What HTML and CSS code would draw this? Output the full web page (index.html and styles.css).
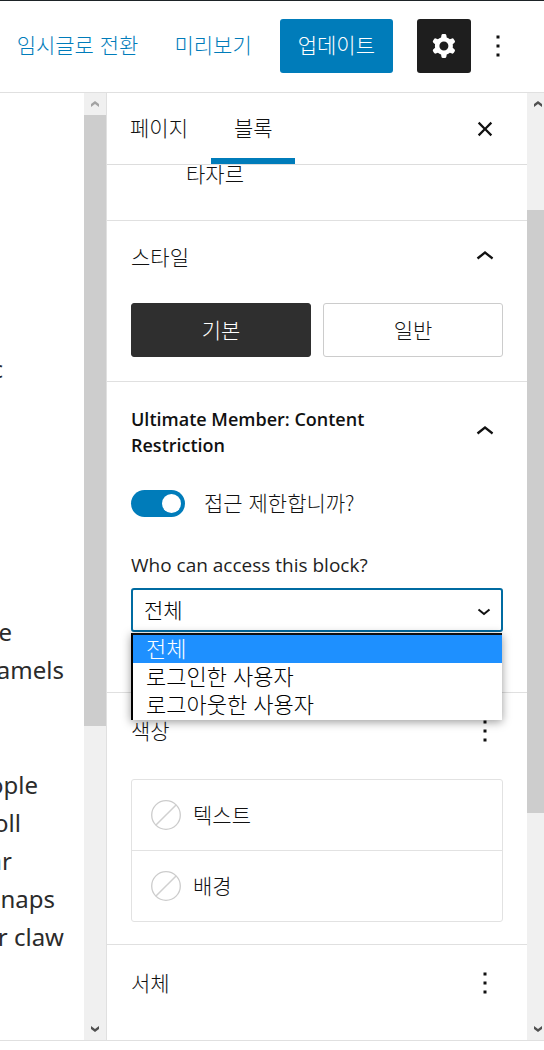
FILE: index.html
```html
<!DOCTYPE html>
<html lang="ko">
<head>
<meta charset="utf-8">
<meta name="viewport" content="width=device-width, initial-scale=1">
<title>페이지 편집</title>
<link rel="stylesheet" href="styles.css">
</head>
<body>
<svg class="sprite" aria-hidden="true">
  <symbol id="i-cog" viewBox="0 0 24 24"><path fill-rule="evenodd" d="M10.289 4.836A1 1 0 0111.275 4h1.306a1 1 0 01.987.836l.244 1.466c.787.26 1.503.679 2.108 1.218l1.393-.522a1 1 0 011.216.437l.653 1.13a1 1 0 01-.23 1.273l-1.148.944a6.025 6.025 0 010 2.435l1.149.946a1 1 0 01.23 1.272l-.653 1.13a1 1 0 01-1.216.437l-1.394-.522c-.605.54-1.32.958-2.108 1.218l-.244 1.466a1 1 0 01-.987.836h-1.306a1 1 0 01-.986-.836l-.244-1.466a5.995 5.995 0 01-2.108-1.218l-1.394.522a1 1 0 01-1.217-.436l-.653-1.131a1 1 0 01.23-1.272l1.149-.946a6.026 6.026 0 010-2.435l-1.148-.944a1 1 0 01-.23-1.272l.653-1.131a1 1 0 011.217-.437l1.393.522a5.994 5.994 0 012.108-1.218l.244-1.466zM14.929 12a3 3 0 11-6 0 3 3 0 016 0z"/></symbol>
  <symbol id="i-more" viewBox="0 0 24 24"><path d="M13 19h-2v-2h2v2zm0-6h-2v-2h2v2zm0-6h-2V5h2v2z"/></symbol>
  <symbol id="i-close" viewBox="0 0 24 24"><path d="M12 13.06l3.712 3.713 1.061-1.06L13.061 12l3.712-3.712-1.06-1.06L12 10.938 8.288 7.227l-1.061 1.06L10.939 12l-3.712 3.712 1.06 1.061L12 13.061z"/></symbol>
  <symbol id="i-up" viewBox="0 0 24 24"><path d="M6.5 12.4L12 8l5.5 4.4-.9 1.2L12 10l-4.5 3.6-1-1.2z"/></symbol>
  <symbol id="i-down" viewBox="0 0 14 8"><path d="M1.500 1.500L7 6l5.500-4.500" fill="none" stroke="currentColor" stroke-width="2"/></symbol>
  <symbol id="i-arrow" viewBox="0 0 8 6"><path d="M0 6V3L4 0l4 3v3L4 3z"/></symbol>
  <symbol id="i-none" viewBox="0 0 30 30"><path d="M4.700 25.300L25.300 4.700" fill="none" stroke="#d0d0d0" stroke-width="1.500"/><circle cx="15" cy="15" r="14.300" fill="none" stroke="#ccc" stroke-width="1.300"/></symbol>
</svg>
<div class="app">
  <header class="topbar">
    <button class="link-btn" type="button">임시글로 전환</button>
    <button class="link-btn" type="button">미리보기</button>
    <button class="update" type="button">업데이트</button>
    <button class="settings" type="button" aria-label="설정"><svg class="icon"><use href="#i-cog"/></svg></button>
    <button class="icon-btn" type="button" aria-label="옵션"><svg class="icon"><use href="#i-more"/></svg></button>
  </header>
  <div class="body">
    <main class="canvas">
      <p class="para"><span class="line to-3">c</span></p>
      <p class="para"><span class="line to-12">e</span><span class="line to-64">camels</span></p>
      <p class="para"><span class="line to-38">people</span><span class="line to-21">roll</span><span class="line to-12">ar</span><span class="line to-55">snaps</span><span class="line to-64">r claw</span></p>
    </main>
    <div class="scrollbar canvas-scroll" aria-hidden="true">
      <span class="cap dim"><svg class="arrow"><use href="#i-arrow"/></svg></span>
      <span class="track"><span class="thumb"></span></span>
      <span class="cap down"><svg class="arrow"><use href="#i-arrow"/></svg></span>
    </div>
    <aside class="sidebar">
      <div class="tabs">
        <button class="tab" type="button">페이지</button>
        <button class="tab active" type="button">블록</button>
        <button class="icon-btn close" type="button" aria-label="닫기"><svg class="icon"><use href="#i-close"/></svg></button>
      </div>
      <div class="panels">
        <p class="summary">타자르</p>
        <section class="panel">
          <div class="panel-head"><h2 class="panel-title">스타일</h2><button class="icon-btn" type="button" aria-label="스타일 접기"><svg class="icon"><use href="#i-up"/></svg></button></div>
          <div class="panel-body variants">
            <button class="variant selected" type="button">기본</button>
            <button class="variant" type="button">일반</button>
          </div>
        </section>
        <section class="panel">
          <div class="panel-head"><h2 class="panel-title strong">Ultimate Member: Content Restriction</h2><button class="icon-btn" type="button" aria-label="콘텐츠 제한 접기"><svg class="icon"><use href="#i-up"/></svg></button></div>
          <div class="panel-body restriction">
            <div class="toggle-row"><input class="toggle" id="restrict" type="checkbox" checked><label class="toggle-label" for="restrict">접근 제한합니까?</label></div>
            <label class="field-label" for="access">Who can access this block?</label>
            <div class="select-wrap">
              <select class="select" id="access"><option>전체</option><option>로그인한 사용자</option><option>로그아웃한 사용자</option></select>
              <svg class="caret" aria-hidden="true"><use href="#i-down"/></svg>
              <ul class="menu" role="listbox" aria-label="Who can access this block?">
                <li class="option current" role="option" aria-selected="true">전체</li>
                <li class="option" role="option">로그인한 사용자</li>
                <li class="option" role="option">로그아웃한 사용자</li>
              </ul>
            </div>
          </div>
        </section>
        <section class="panel">
          <div class="panel-head tools"><h2 class="panel-title">색상</h2><button class="icon-btn" type="button" aria-label="색상 옵션"><svg class="icon"><use href="#i-more"/></svg></button></div>
          <div class="panel-body">
            <div class="colors">
              <button class="color" type="button"><svg class="swatch"><use href="#i-none"/></svg><span class="color-name">텍스트</span></button>
              <button class="color" type="button"><svg class="swatch"><use href="#i-none"/></svg><span class="color-name">배경</span></button>
            </div>
          </div>
        </section>
        <section class="panel last">
          <div class="panel-head tools"><h2 class="panel-title">서체</h2><button class="icon-btn" type="button" aria-label="서체 옵션"><svg class="icon"><use href="#i-more"/></svg></button></div>
        </section>
      </div>
    </aside>
    <div class="scrollbar side-scroll" aria-hidden="true">
      <span class="cap"><svg class="arrow"><use href="#i-arrow"/></svg></span>
      <span class="track"><span class="thumb"></span></span>
      <span class="cap down"><svg class="arrow"><use href="#i-arrow"/></svg></span>
    </div>
  </div>
</div>
</body>
</html>
```
FILE: styles.css
```css
* { box-sizing: border-box; }
body, p, h2, ul { margin: 0; padding: 0; }
body {
  background: #fff;
  color: #111;
  font: 300 21px/28px "Noto Sans CJK KR", sans-serif;
}
button, select { font: inherit; color: inherit; margin: 0; }
button { background: none; border: 0; padding: 0; cursor: pointer; white-space: nowrap; }
.sprite { position: absolute; width: 0; height: 0; }
.icon { display: block; width: 36px; height: 36px; fill: currentColor; }
.icon-btn { flex: none; width: 36px; height: 36px; }

.app {
  display: flex;
  flex-direction: column;
  height: 100vh;
  padding-bottom: 9px;
  border-top: 1px solid #1d2327;
  overflow: hidden;
}
.topbar {
  display: flex;
  flex: none;
  align-items: center;
  justify-content: flex-end;
  height: 92px;
  padding: 0 28px 2px 0;
  border-bottom: 1px solid #e0e0e0;
}
.link-btn { padding: 0 18px 3px; color: #007cba; }
.update {
  height: 54px;
  margin: 0 24px 0 10px;
  padding: 0 18px 3px;
  border-radius: 3px;
  background: #007cba;
  color: #fff;
}
.settings {
  display: grid;
  flex: none;
  place-items: center;
  width: 54px;
  height: 54px;
  margin-right: 9px;
  border-radius: 3px;
  background: #1e1e1e;
  color: #fff;
}

.body {
  display: grid;
  grid-template-columns: minmax(0, 1fr) 22px 421px 17px;
  flex: 1;
  min-height: 0;
  border-bottom: 1px solid #e0e0e0;
}
.canvas {
  display: flex;
  flex-direction: column;
  gap: 77px;
  padding-top: 257px;
  overflow: hidden;
  color: #2b2b2b;
  font: 400 24px/38px "Noto Sans", "Open Sans", sans-serif;
}
.para:first-child { margin-bottom: 148px; }
.line { display: flex; justify-content: flex-end; white-space: nowrap; }
.to-3 { width: 3px; }
.to-12 { width: 12px; }
.to-21 { width: 21px; }
.to-38 { width: 38px; }
.to-55 { width: 55px; }
.to-64 { width: 64px; }

.scrollbar { display: flex; flex-direction: column; min-height: 0; overflow: hidden; background: #f0f0f0; }
.cap { display: grid; flex: none; place-items: center; width: 22px; height: 22px; color: #505050; }
.cap.dim { color: #a3a3a3; }
.arrow { width: 8px; height: 6px; fill: currentColor; }
.down .arrow { transform: rotate(180deg); }
.track { display: block; flex: 1; }
.thumb { display: block; background: #cdcdcd; }
.canvas-scroll .thumb { height: 611px; }
.side-scroll .track { padding-top: 95px; }
.side-scroll .thumb { height: 603px; }

.sidebar { display: flex; flex-direction: column; min-height: 0; border-left: 1px solid #e0e0e0; }
.tabs { display: flex; flex: none; height: 72px; align-items: stretch; border-bottom: 1px solid #ddd; }
.tab { padding: 0 23px 4px; border-bottom: 6px solid transparent; border-top: 6px solid transparent; }
.tab.active { padding-right: 22px; border-bottom-color: #007cba; }
.close { align-self: center; margin: 0 24px 0 auto; }
.panels { flex: 1; min-height: 0; overflow: hidden; }
.summary { height: 56px; padding-left: 79px; line-height: 16px; border-bottom: 1px solid #e0e0e0; }
.panel { border-bottom: 1px solid #e0e0e0; }
.panel.last { border-bottom: 0; }
.panel-head {
  display: flex;
  align-items: center;
  justify-content: space-between;
  min-height: 72px;
  padding: 0 24px;
}
.panel-head.tools { min-height: 76px; }
.panel-title { padding-bottom: 2px; font-size: 21px; font-weight: 300; line-height: 28px; }
.panel-title.strong {
  max-width: 260px;
  padding: 24px 0;
  font: 600 18px/26px "Open Sans", "Noto Sans", sans-serif;
}
.panel-body { padding: 10px 24px 22px; }
.variants { display: grid; grid-template-columns: 1fr 1fr; gap: 12px; padding-bottom: 24px; }
.variant { height: 54px; padding-bottom: 3px; border: 1px solid #ccc; border-radius: 3px; background: #fff; }
.variant.selected { border-color: #2f2f2f; background: #2f2f2f; color: #fff; }

.restriction { padding-top: 8px; padding-bottom: 60px; }
.toggle-row { display: flex; align-items: center; gap: 19px; height: 27px; }
.toggle {
  appearance: none;
  display: flex;
  justify-content: flex-end;
  flex: none;
  width: 54px;
  height: 27px;
  margin: 0;
  padding: 4px;
  border-radius: 14px;
  background: #007cba;
}
.toggle::before { content: ""; width: 19px; height: 19px; border-radius: 50%; background: #fff; }
.toggle:not(:checked) { justify-content: flex-start; background: #757575; }
.toggle-label { padding-bottom: 3px; }
.field-label {
  display: block;
  margin: 34px 0 9px;
  color: #1e1e1e;
  font: 400 19px/28px "Open Sans", "Noto Sans", sans-serif;
}
.select-wrap { position: relative; }
.select {
  appearance: none;
  display: block;
  width: 100%;
  height: 44px;
  padding: 0 40px 3px 11px;
  border: 2px solid #006ba1;
  border-radius: 3px;
  background: #fff;
  color: #000;
}
.caret { position: absolute; right: 12px; top: 20px; width: 14px; height: 8px; pointer-events: none; }
.menu {
  position: absolute;
  z-index: 2;
  top: 45px;
  left: 0;
  right: 1px;
  padding-bottom: 1px;
  list-style: none;
  border-top: 2px solid #101010;
  border-left: 2px solid #000;
  background: #fff;
  box-shadow: 0 2px 9px rgba(0, 0, 0, .4);
  color: #000;
}
.option { height: 28px; padding-left: 13px; font-size: 22px; line-height: 24px; }
.option.current { background: #1e90ff; color: #fff; }

.colors { border: 1px solid #e2e2e2; border-radius: 3px; }
.color { display: flex; align-items: center; gap: 12px; width: 100%; height: 70px; padding-left: 19px; }
.color + .color { height: 71px; border-top: 1px solid #e2e2e2; }
.color-name { padding-bottom: 3px; }
.swatch { width: 30px; height: 30px; }
```
